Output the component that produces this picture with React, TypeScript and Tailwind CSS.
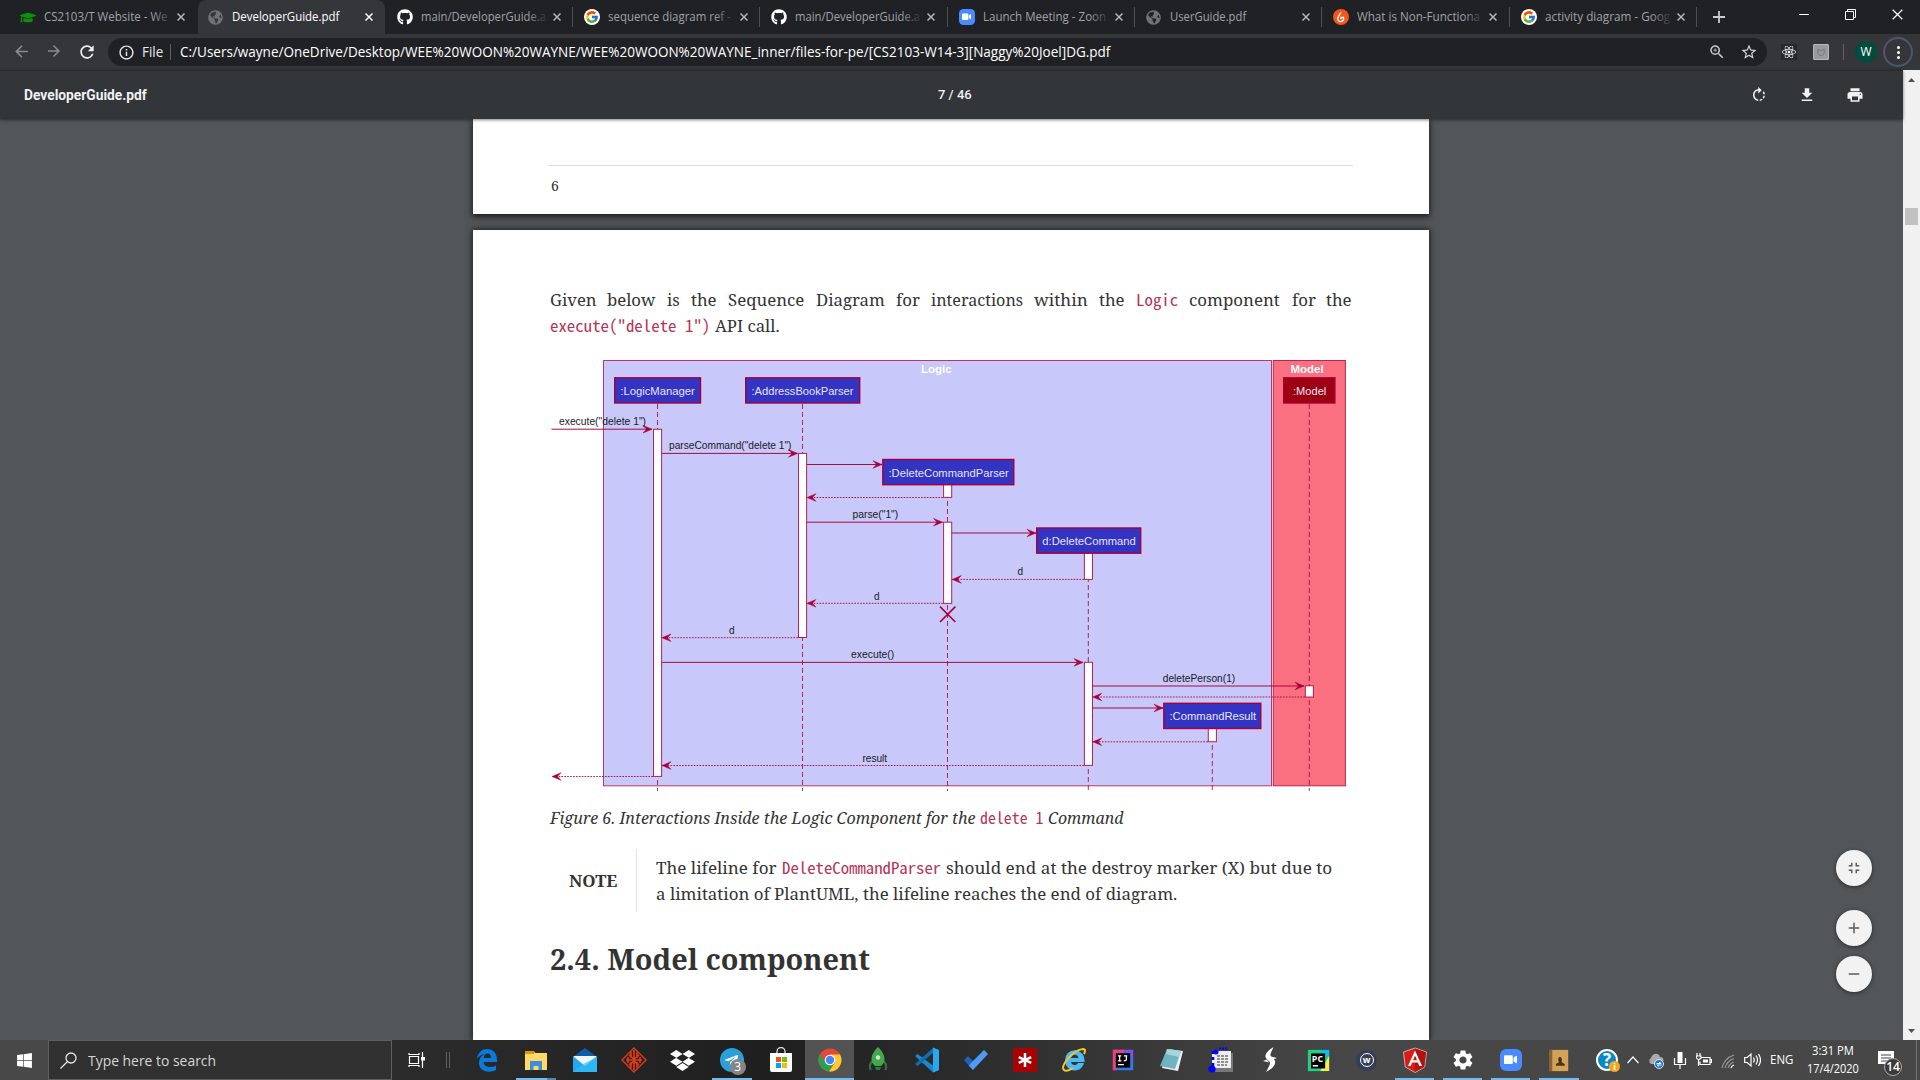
import React, { useLayoutEffect, useRef, useState } from "react";
import { FaGithub, FaDropbox, FaGraduationCap, FaGlobeAmericas, FaTelegramPlane, FaWindows, FaReact, FaVideo } from "react-icons/fa";
import { FcGoogle } from "react-icons/fc";
import { MdRotateRight, MdFileDownload, MdPrint, MdArrowBack, MdArrowForward, MdRefresh, MdZoomIn, MdStarBorder, MdInfoOutline, MdSettings, MdFullscreenExit, MdAdd, MdRemove } from "react-icons/md";

/* Text set to an exact advance width; glyphs are condensed or stretched to fill it. */
function Fit({ w, className = "", children }: { w: number; className?: string; children: React.ReactNode }) {
  const ref = useRef<HTMLSpanElement>(null);
  const [scale, setScale] = useState(1);
  useLayoutEffect(() => {
    if (ref.current) setScale(w / ref.current.offsetWidth);
  }, [w]);
  return (
    <span className={"inline-block whitespace-nowrap " + className} style={{ width: w }}>
      <span ref={ref} className="inline-block origin-left" style={{ transform: `scaleX(${scale})` }}>
        {children}
      </span>
    </span>
  );
}

const ZoomLogo = ({ size }: { size: number }) => (
  <span className="flex items-center justify-center rounded-[28%] bg-[#4a8cff] text-white" style={{ width: size, height: size }}>
    <FaVideo size={size * 0.6} />
  </span>
);

const tabs = [
  { t: "CS2103/T Website - We", w: 124, icon: <FaGraduationCap size={17} color="#0a930a" /> },
  { t: "DeveloperGuide.pdf", w: 107, active: true, icon: <FaGlobeAmericas size={15} color="#6f7276" /> },
  { t: "main/DeveloperGuide.a", w: 125, icon: <FaGithub size={16} color="#fff" /> },
  { t: "sequence diagram ref -", w: 123, icon: <G /> },
  { t: "main/DeveloperGuide.a", w: 125, icon: <FaGithub size={16} color="#fff" /> },
  { t: "Launch Meeting - Zoon", w: 123, icon: <ZoomLogo size={16} /> },
  { t: "UserGuide.pdf", w: 76, icon: <FaGlobeAmericas size={15} color="#6f7276" /> },
  {
    t: "What is Non-Functiona", w: 123,
    icon: (
      <svg width="16" height="16" viewBox="0 0 16 16"><circle cx="8" cy="8" r="8" fill="#f4571b" /><path d="M8 3.2 5.6 7.4a3 3 0 1 0 4.9 1.1L8 8.4v1.8" stroke="#fff" strokeWidth="1.3" fill="none" /></svg>
    ),
  },
  { t: "activity diagram - Goog", w: 125, icon: <G /> },
];

function G() {
  return <span className="flex size-4 items-center justify-center rounded-full bg-white"><FcGoogle size={14} /></span>;
}

const Cross = ({ color, s = 8 }: { color: string; s?: number }) => (
  <svg width={s} height={s} viewBox="0 0 8 8"><path d="M0.5 .5 7.5 7.5M7.5 .5 .5 7.5" stroke={color} strokeWidth={s > 9 ? 0.9 : 1.5} /></svg>
);

function TabStrip() {
  return (
    <div className="flex h-[34px] shrink-0 bg-[#202124] pl-[10px]">
      {tabs.map((tab, i) => (
        <div
          key={i}
          className={
            "relative flex h-[34px] w-[187.3px] shrink-0 items-center " +
            (tab.active ? "rounded-t-lg bg-[#35363a] pl-[10px] text-white" : "pl-3 text-[#9fa3a8]") +
            (i === 0 ? " w-[187.5px]! pl-[10px]!" : "")
          }
        >
          <span className="flex w-4 justify-center">{tab.icon}</span>
          <span className="ml-2 flex w-[128px] overflow-hidden text-[12px] leading-4">
            <Fit w={tab.w}>{tab.t}</Fit>
          </span>
          {tab.w > 110 && (
            <span className="absolute left-[142px] h-5 w-[22px] bg-linear-to-r from-transparent to-[#202124]" />
          )}
          <span className={tab.active || i === 0 ? "ml-[5px]" : "ml-1"}><Cross color={tab.active ? "#fff" : "#b4b7bb"} /></span>
          {i > 1 && <span className="absolute -right-px top-[7px] h-5 w-px bg-[#4d4f53]" />}
        </div>
      ))}
      <svg className="ml-[17px] mt-[11px]" width="12" height="12" viewBox="0 0 12 12"><path d="M6 0v12M0 6h12" stroke="#ccc" strokeWidth="1.8" /></svg>
      <div className="ml-auto flex gap-[36px] pr-[17px] pt-[9px]">
        <svg width="10" height="11"><path d="M0 5.500h10" stroke="#fff" /></svg>
        <svg width="11" height="11"><path d="M.5 2.500h8v8h-8zM2.500 2.500v-2h8v8h-2" stroke="#fff" fill="none" /></svg>
        <Cross color="#fff" s={11} />
      </div>
    </div>
  );
}

function AddressBar() {
  return (
    <div className="flex h-9 shrink-0 items-center bg-[#35363a]">
      <div className="flex w-[108px] gap-[14px] pl-[12px]">
        <MdArrowBack size={19} color="#8a8b8e" />
        <MdArrowForward size={18} color="#8a8b8e" />
        <MdRefresh size={20} color="#f1f1f1" />
      </div>
      <div className="flex h-7 w-[1659px] items-center rounded-full bg-[#202124] pl-[10px] pr-[9px] text-[14px] text-[#e8eaed]">
        <MdInfoOutline size={17} />
        <Fit w={21} className="-mt-px ml-[7px]">File</Fit>
        <span className="ml-[7px] mr-[9px] h-4 w-px bg-[#5f6165]" />
        <Fit w={930} className="-mt-px text-white">C:/Users/wayne/OneDrive/Desktop/WEE%20WOON%20WAYNE/WEE%20WOON%20WAYNE_inner/files-for-pe/[CS2103-W14-3][Naggy%20Joel]DG.pdf</Fit>
        <MdZoomIn size={18} className="ml-auto mr-[14px]" color="#c8c9cc" />
        <MdStarBorder size={18} color="#d5d6d8" />
      </div>
      <span className="ml-[14px] flex size-4 items-center justify-center bg-[#27282b]"><FaReact size={14} color="#fff" /></span>
      <span className="ml-4 flex size-4 items-center justify-center rounded-[1px] border border-[#b8b8b8] bg-[#989a9d]">
        <svg width="8" height="9" viewBox="0 0 8 9"><path d="M.8 1v4.600L4 7.800l3.200-2.200V1L4 3z" fill="none" stroke="#76787b" /></svg>
      </span>
      <span className="ml-[14px] h-4 w-px bg-[#606266]" />
      <span className="ml-[11px] flex size-[22px] items-center justify-center rounded-full bg-[#004d40] text-[12px] text-white">W</span>
      <span className="ml-[6px] flex size-[30px] flex-col items-center justify-center gap-[2px] rounded-full border-2 border-[#4c566d]">
        <i className="size-[3px] rounded-full bg-white" />
        <i className="size-[3px] rounded-full bg-white" />
        <i className="size-[3px] rounded-full bg-white" />
      </span>
    </div>
  );
}

function ViewerBar() {
  return (
    <div className="relative z-10 flex h-[49px] shrink-0 items-center border-t border-[#28292b] bg-[#323639] pl-6 font-['Roboto'] text-[#f1f1f1] shadow-[0_1px_3px_rgba(0,0,0,0.5)]">
      <Fit w={123} className="text-[14px] font-bold">DeveloperGuide.pdf</Fit>
      <Fit w={34} className="ml-[791px] text-[13px] font-medium">7 / 46</Fit>
      <div className="ml-auto flex gap-[30px] pr-[39px]">
        <MdRotateRight size={18} />
        <MdFileDownload size={18} />
        <MdPrint size={18} />
      </div>
    </div>
  );
}

/* ---------- sequence diagram ---------- */

const RED = "#a80036";

const T = ({ x, y, w, s = 10.6, f = "#1a1a22", b, children }: { x: number; y: number; w: number; s?: number; f?: string; b?: boolean; children: string }) => (
  <text x={x} y={y} fontSize={s} fill={f} fontWeight={b ? 700 : 400} textLength={w} lengthAdjust="spacingAndGlyphs">{children}</text>
);

const Arrow = ({ x1, x2, y, dash }: { x1: number; x2: number; y: number; dash?: boolean }) => {
  const d = x2 > x1 ? -1 : 1;
  return (
    <g>
      <path d={`M${x1} ${y}H${x2}`} stroke={RED} strokeWidth="1" strokeDasharray={dash ? "1.7 1.2" : undefined} opacity={dash ? 0.85 : 0.95} />
      <path d={`M${x2} ${y}l${9 * d} -3.8l${-3.6 * d} 3.8l${3.6 * d} 3.8z`} fill={RED} stroke={RED} strokeWidth=".5" />
    </g>
  );
};

const lifelines = [
  [657.5, 403], [802.5, 403], [947.5, 484], [1088.3, 552], [1309.3, 403], [1212.3, 728],
];
const activations = [
  [653.5, 429.3, 776.4], [798.5, 453.4, 637.5], [943.6, 484, 497.4], [943.6, 522.2, 603.4],
  [1084.4, 552, 579.4], [1084.4, 662.3, 765.4], [1305.3, 685.8, 697], [1208.3, 728, 741.7],
];
const heads = [
  { x: 614.7, y: 377.8, w: 85.8, t: ":LogicManager", tx: 620.3, tw: 74.4 },
  { x: 745.7, y: 377.8, w: 114, t: ":AddressBookParser", tx: 751.5, tw: 102 },
  { x: 882.8, y: 459.5, w: 131, t: ":DeleteCommandParser", tx: 888.5, tw: 120.3 },
  { x: 1036.7, y: 528, w: 104, t: "d:DeleteCommand", tx: 1042.3, tw: 93.5 },
  { x: 1163.8, y: 703.3, w: 97, t: ":CommandResult", tx: 1169.5, tw: 86.7 },
  { x: 1283.7, y: 377.8, w: 51.2, t: ":Model", tx: 1293, tw: 33.3, m: true },
];

function Diagram() {
  return (
    <svg width="804" height="440" viewBox="549 355 804 440" className="block font-['Liberation_Sans']">
      <rect x="603.5" y="360.5" width="668" height="425.3" fill="#c8c8fa" stroke={RED} strokeOpacity=".75" />
      <rect x="1273.2" y="360.5" width="72.2" height="425.3" fill="#fa7080" stroke={RED} strokeOpacity=".8" />
      <T x={921} y={372.6} w={30.5} s={11.6} f="#fff" b>Logic</T>
      <T x={1290.5} y={372.6} w={33.2} s={11.6} f="#fff" b>Model</T>
      {lifelines.map(([x, y]) => (
        <path key={x} d={`M${x} ${y + 1}V791`} stroke={RED} strokeWidth="1" strokeDasharray="5 3" strokeOpacity=".8" />
      ))}
      {activations.map(([x, y, e]) => (
        <rect key={`${x}-${y}`} x={x} y={y} width="8.1" height={e - y} fill="#fff" stroke={RED} strokeOpacity=".85" />
      ))}
      {heads.map((h) => (
        <g key={h.t}>
          <rect x={h.x} y={h.y} width={h.w} height="25.2" fill={h.m ? "#9d0012" : "#3333c4"} stroke={RED} strokeWidth="1.4" />
          <T x={h.tx} y={h.y + 17} w={h.tw} s={11.4} f="#e6e6f8">{h.t}</T>
        </g>
      ))}
      <Arrow x1={551.5} x2={652} y={429.2} />
      <Arrow x1={662} x2={797.5} y={453.4} />
      <Arrow x1={807} x2={882} y={464.5} />
      <Arrow x1={943} x2={807} y={497.5} dash />
      <Arrow x1={807} x2={942.5} y={522.2} />
      <Arrow x1={952} x2={1036} y={533} />
      <Arrow x1={1084} x2={952.3} y={579.4} dash />
      <Arrow x1={943} x2={807} y={603.3} dash />
      <Arrow x1={798} x2={662} y={637.7} dash />
      <Arrow x1={662} x2={1083} y={662.4} />
      <Arrow x1={1093} x2={1304} y={686} />
      <Arrow x1={1305} x2={1092.8} y={697} dash />
      <Arrow x1={1093} x2={1163} y={708} />
      <Arrow x1={1208} x2={1092.8} y={741.8} dash />
      <Arrow x1={1084} x2={662} y={765.5} dash />
      <Arrow x1={653} x2={552} y={776.5} dash />
      <path d="M940 606.6l15.4 15.4M955.4 606.6 940 622" stroke={RED} strokeWidth="1.6" />
      <T x={559} y={425.4} w={87}>execute("delete 1")</T>
      <T x={669} y={449} w={122.5}>parseCommand("delete 1")</T>
      <T x={852.6} y={517.7} w={45.6}>parse("1")</T>
      <T x={1017.6} y={575.2} w={5.6}>d</T>
      <T x={874} y={599.6} w={5.6}>d</T>
      <T x={729} y={634.2} w={5.6}>d</T>
      <T x={851} y={657.8} w={43.2}>execute()</T>
      <T x={1162.8} y={682.4} w={72.4}>deletePerson(1)</T>
      <T x={862.4} y={762} w={24.8}>result</T>
    </svg>
  );
}

/* ---------- document ---------- */

const Code = ({ w, children }: { w: number; children: string }) => (
  <Fit w={w} className="-mt-px font-['M+_1mn','Noto_Sans_Mono_CJK_JP','Noto_Sans_Mono','DejaVu_Sans_Mono',monospace] text-[16.5px] leading-[26px] not-italic text-[#b83358]">{children}</Fit>
);

const first = "Given below is the Sequence Diagram for interactions within the".split(" ");
const firstW = [46.5, 48.5, 13, 25.5, 76.5, 69, 23.5, 92, 54, 25.5];

function Document() {
  return (
    <div className="flex h-[921px] w-[956px] flex-col gap-4 overflow-visible font-['Noto_Serif','DejaVu_Serif',serif] text-[16.5px] text-[#333]">
      <div className="h-[95px] shrink-0 bg-white px-[76px] pt-[46px] shadow-[0_2px_6px_1px_rgba(0,0,0,0.65)]">
        <div className="border-t border-[#ddd] pl-[2px] pt-[9px] text-[14px] leading-[22px]"><Fit w={8}>6</Fit></div>
      </div>
      <div className="h-[810px] shrink-0 bg-white pl-[76px] shadow-[0_0_6px_1px_rgba(0,0,0,0.65)]">
        <div className="flex w-[803px] justify-between pl-[0.500px] pt-[57px] leading-[26px]">
          {first.map((t, i) => <Fit key={i} w={firstW[i]}>{t}</Fit>)}
          <Code w={42}>Logic</Code>
          <Fit w={91}>component</Fit>
          <Fit w={23.5}>for</Fit>
          <Fit w={25.5}>the</Fit>
        </div>
        <div className="flex h-[42px] gap-[5px] pl-[0.500px] leading-[26px]">
          <Code w={160.5}>execute("delete 1")</Code>
          <Fit w={65}>API call.</Fit>
        </div>
        <Diagram />
        <div className="mt-[10px] flex gap-[5px] pl-[0.500px] text-[16px] italic leading-[26px]">
          <Fit w={425}>Figure 6. Interactions Inside the Logic Component for the</Fit>
          <Code w={63.5}>delete 1</Code>
          <Fit w={75.5}>Command</Fit>
        </div>
        <div className="mt-[18px] flex h-[63px]">
          <div className="flex w-[88px] items-center border-r border-[#e4e4e4] pl-[19.500px] font-bold"><Fit w={48.5} className="text-[16px]">NOTE</Fit></div>
          <div className="pl-[18.500px] pt-[6px] leading-[26px]">
            <div className="flex h-[26px] gap-[5px]">
              <Fit w={121}>The lifeline for</Fit>
              <Code w={159.5}>DeleteCommandParser</Code>
              <Fit w={386}>should end at the destroy marker (X) but due to</Fit>
            </div>
            <Fit w={521}>a limitation of PlantUML, the lifeline reaches the end of diagram.</Fit>
          </div>
        </div>
        <div className="pl-[0.500px] pt-[26px] text-[28px] font-bold leading-[42px]"><Fit w={320}>2.4. Model component</Fit></div>
      </div>
    </div>
  );
}

const Round = ({ children, className = "" }: { children: React.ReactNode; className?: string }) => (
  <span className={"flex size-9 items-center justify-center rounded-full bg-[#f2f2f2] text-[#5a5a5a] shadow-[0_1px_4px_rgba(0,0,0,0.5)] " + className}>{children}</span>
);

/* ---------- taskbar ---------- */

const S = ({ children, s = 26 }: { children: React.ReactNode; s?: number }) => <svg width={s} height={s} viewBox="0 0 26 26">{children}</svg>;

const apps: { icon: React.ReactNode; on?: boolean; hi?: boolean; split?: boolean }[] = [
  { icon: <S><path d="M3 12C4 5 8 2 13 2c6 0 10 4.500 10 10.500V15H9.500c.3 3.500 3 5 6.500 5 2.500 0 4.500-.7 6-1.600V23c-2 1.200-4.300 1.700-7 1.700C8.500 24.700 5 21 5 16c0-4 2-7 5.500-9C7 7.500 4.500 9.500 3 12zm6.600-1H17c0-3-1.300-4.500-3.500-4.500S9.900 8.300 9.600 11z" fill="#0a7bdc" /></S> },
  { icon: <S><path d="M2 4h9l1 2h12v17H2z" fill="#ffd866" /><path d="M2 4h9v3H2z" fill="#d99a00" /><path d="M7 23v-9h12v9h-3.500v-4h-5v4z" fill="#3a8edb" /></S>, on: true, split: true },
  { icon: <S><path d="M1 10 13 1l12 9v3H1z" fill="#0d5ea8" /><path d="M1 10h24v15H1z" fill="#24a8ec" /><path d="M1 9h24L13 19z" fill="#f3f5f6" /><path d="M1 25 13 16l12-6v15z" fill="#2fc0fa" opacity=".65" /></S> },
  { icon: <S><path d="m13 1 12 12-12 12L1 13z" fill="none" stroke="#e03a18" strokeWidth="1.400" /><path d="M13 3v20M8 8l5 4 5-4M5 13h16M8 18l5-4 5 4M10 5v6M16 5v6M10 15v6M16 15v6M7 10v6M19 10v6" stroke="#e03a18" strokeWidth="1.700" fill="none" /></S> },
  { icon: <FaDropbox size={25} color="#fff" /> },
  { icon: <span className="relative flex size-6 items-center justify-center rounded-full bg-[#2b9fd9]"><FaTelegramPlane size={15} color="#fff" /><span className="absolute left-[10px] top-[11px] flex size-4 items-center justify-center rounded-full bg-[#858585] text-[12px] text-white">3</span></span>, on: true },
  { icon: <S><path d="M9 7V4.500a4 4 0 0 1 8 0V7" fill="none" stroke="#ddd" strokeWidth="1.300" /><path d="M2 6h22v17a2 2 0 0 1-2 2H4a2 2 0 0 1-2-2z" fill="#fff" /><path d="M8 10h5v5H8z" fill="#f25022" /><path d="M14 10h5v5h-5z" fill="#7fba00" /><path d="M8 16h5v5H8z" fill="#00a4ef" /><path d="M14 16h5v5h-5z" fill="#ffb900" /></S> },
  { icon: <S><circle cx="13" cy="13" r="11.500" fill="#e14a3b" /><path d="M3 7.300A11.500 11.500 0 0 0 12 24.500L17.500 15 8.500 15.500z" fill="#2da04e" /><path d="M23 7.500H13l5 8-6 9A11.500 11.500 0 0 0 23 7.500z" fill="#fbcb2f" /><circle cx="13" cy="13" r="5.300" fill="#fff" /><circle cx="13" cy="13" r="4.200" fill="#4486f4" /></S>, on: true, hi: true },
  { icon: <S><path d="M8 14c-3 2-4 5-2.500 9M18 14c3 2 4 5 2.500 9" fill="none" stroke="#35704a" strokeWidth="2.200" /><path d="M13 0c5 5 6.500 9 6.500 12.500 0 3-2 5-3.500 6.500h-6c-1.500-1.500-3.500-3.500-3.500-6.500C6.500 9 8 5 13 0z" fill="#43a84b" /><path d="M10 20h6l-1 3h-4z" fill="#2c7d3d" /><circle cx="13" cy="10.500" r="2.200" fill="#cfe8d0" /></S> },
  { icon: <S><path d="M1 9 3.500 7 25 23v0l-6 2.500z" fill="#1c86cf" /><path d="M1 17l2.500 2L19 6V1z" fill="#0f6fb5" /><path d="M19 .5 25 3v20l-6 2.500z" fill="#29a8ef" /></S> },
  { icon: <S><path d="m1 13 4-4 6 6-4 5z" fill="#2160c0" /><path d="M7 17 21 3l4 4-15 16-4-4z" fill="#4e9af5" /></S> },
  { icon: <span className="flex size-6 items-center justify-center bg-[#a80202]"><S s={18}><path d="M13 3v20M4 9l18 8M22 9 4 17" stroke="#fff" strokeWidth="3.600" /></S></span> },
  { icon: <S><path d="M4 13a9.500 9.500 0 0 1 19.500 0v2H10c.3 3 5 4.500 7 1h6c-1.500 5-5 7.500-9.500 7.500C8 23.500 4 19 4 13zm6-2h7.500c-.5-4.500-7-4.500-7.500 0z" fill="#4cbaf0" /><path d="M3 23C-1 19 12 3 22 2c3 0 2 3 1 5M3 23c2 2 6 0 9-2" fill="none" stroke="#f6c52c" strokeWidth="2" /></S> },
  { icon: <S s={22}><path d="M1 1h13l11 8v16H1z" fill="#2f79e8" /><path d="M1 1h14L5 25H1z" fill="#f0407c" /><path d="M14 1h11v12z" fill="#7d4ff0" /><path d="M4.500 5h17v17h-17z" fill="#000" /><path d="M7 8h4M9 8v6M7 14h4M14 8h4M17 8v4.500q0 1.500-3 1.500M7 18.500h7" stroke="#fff" strokeWidth="1.500" fill="none" /></S> },
  { icon: <S><path d="M9 2 24 4l-5 20-16-3z" fill="#eee" /><path d="M8 2l14 2-6 18L1 19z" fill="#6fb4c0" /><path d="m8 2 14 2-2 6-13-3z" fill="#a5d4da" /></S> },
  { icon: <S><path d="M5 6h20v19H7z" fill="#777" /><path d="M4 4h19v17H4z" fill="#eee" /><path d="M9 9h11M9 12h11M9 15h11M9 18h10" stroke="#333" strokeWidth="1" strokeDasharray="3 1" /><path d="M5 4v18" stroke="#00f" strokeWidth="2.500" strokeDasharray="3 3" /><circle cx="4" cy="22" r="3.600" fill="#00f" /><circle cx="8" cy="5" r="2.500" fill="#00f" /><path d="M11 1.500h8" stroke="#00f" strokeWidth="2" strokeDasharray="2 1" /></S> },
  { icon: <S><path d="M16.500 0C10 4 7 8 9 11c1 2 4 3 4 5s-2 5-4 9c6-3 10-7 9-11-.7-2.500-4-3.500-4.500-5.500S15 4 16.500 0z" fill="#fff" /><path d="m6 14 4-1.500 2 3zM20 11l-4 1.500-2-3z" fill="#fff" /></S> },
];
const apps2: typeof apps = [
  { icon: <S s={23}><path d="M1 1h24v24H1z" fill="#1fd088" /><path d="M14 1h11v10z" fill="#17b7f0" /><path d="M25 8v17H15z" fill="#f3ee4d" /><path d="M4.500 5h16v17h-16z" fill="#000" /><text x="5.500" y="14.500" fontSize="10" fontWeight="700" fill="#fff">PC</text><path d="M6.500 19h6" stroke="#fff" strokeWidth="1.700" /></S> },
  { icon: <span className="flex size-[21px] items-center justify-center rounded-full bg-[#353e54]"><span className="flex size-[14px] items-center justify-center rounded-full border-[1.500px] border-white pb-px text-[9px] font-bold text-white">w</span></span> },
  { icon: <S s={26}><path d="m13 1 11.500 4-1.800 15L13 25.500 3.300 20 1.500 5z" fill="#dd1b16" stroke="#cfcfcf" strokeWidth=".8" /><path d="m13 1.500 11 4-1.800 14.300L13 25z" fill="#b3120d" /><path d="M6 19 13 3.500 20 19h-2.700l-1.400-3.500h-5.800L8.700 19zm5-5.800h4L13 8.500z" fill="#fff" /></S>, on: true },
  { icon: <MdSettings size={24} color="#fff" />, on: true },
  { icon: <ZoomLogo size={22} />, on: true },
  { icon: <S s={23}><path d="M3 1h21v24H3z" fill="#d4a257" /><path d="M3 1h3v24H3z" fill="#8a6330" /><path d="M10 19v-2l3.500-2c-3-8 5-8 3 0l3.500 2v2z" fill="#473319" /></S>, on: true },
];

const AppButton = ({ a, cls }: { a: (typeof apps)[number]; cls: string }) => (
  <div className={"relative flex h-10 shrink-0 items-center justify-center " + cls + (a.hi ? " bg-[#535353]" : "")}>
    {a.icon}
    {a.on && <span className={"absolute bottom-0 h-[2px] bg-[#76b9ed] " + (a.hi ? "inset-x-0" : "inset-x-[4.500px]")} />}
    {a.split && <span className="absolute bottom-0 right-[4px] h-[2px] w-[9px] bg-[#5287b3]" />}
  </div>
);

const W = ({ w, children }: { w: number; children: React.ReactNode }) => (
  <svg width={w} height="22" viewBox={`0 0 ${w} 22`} fill="none" stroke="#fff" strokeWidth="1.200" className="shrink-0">{children}</svg>
);

function Taskbar() {
  return (
    <div className="flex h-10 w-full shrink-0 items-center bg-linear-to-r from-[#3a3a3c] via-[#1f1f1f] via-40% to-[#474747] to-70%">
      <div className="flex h-10 w-12 items-center justify-center bg-[#484848]"><FaWindows size={17} color="#fff" /></div>
      <div className="flex h-10 w-[344px] items-center border border-[#5e5e5e] bg-[#313131] pl-[11px] text-[15px] text-[#d6d6d6]">
        <svg width="17" height="17" viewBox="0 0 17 17" fill="none" stroke="#e5e5e5" strokeWidth="1.300"><circle cx="11" cy="6" r="5" /><path d="M7.500 9.500.5 16.500" /></svg>
        <Fit w={128} className="ml-[11px]">Type here to search</Fit>
      </div>
      <svg width="17" height="16" className="ml-4" fill="none" stroke="#fff" strokeWidth="1.200"><path d="M1.500 4.500h9v7h-9zM1 1v1.500h10V1M1 15v-1.500h10V15M14.500 0v16" /><path d="M13 5h4v3.500h-4z" fill="#fff" stroke="none" /></svg>
      <span className="ml-[21px] h-4 w-[4px] border-x border-[#606060]" />
      <div className="ml-[12.500px] flex">
        {apps.map((a, i) => <AppButton key={i} a={a} cls="w-[48.940px]" />)}
        {apps2.map((a, i) => <AppButton key={i} a={a} cls="w-[48.100px]" />)}
      </div>
      <div className="ml-[13px] flex items-center gap-[9px]">
        <span className="relative flex size-[22px] items-center justify-center rounded-full border-2 border-white bg-[#0a8ac4] text-[17px] font-bold text-white">?
          <span className="absolute -bottom-[3px] -right-[4px] flex size-[11px] items-center justify-center rounded-full bg-[#f5a71b] text-[9px]">i</span>
        </span>
        <W w={12}><path d="m.5 14 5.500-6 5.500 6" /></W>
        <W w={16}><path d="M3 15a3.500 3.500 0 0 1 0-6C4 4 11 3 12 8c3 0 4 2 3 5l-3 2z" fill="#a9a9a9" stroke="none" /><circle cx="11" cy="15" r="4.500" fill="#1b75cf" stroke="#fff" strokeWidth=".8" /><path d="M8.500 14.500h4l-1-1.500M13.500 16h-4l1 1.500" /></W>
        <W w={14}><path d="M4.500 3h5v11h-5z" fill="#fff" stroke="none" /><path d="M1.500 9v6.500h11V9M7 16v4" /></W>
        <W w={16}><path d="M5 8.500h9v7H4v-3M14 10.500h1.500v3H14M1 4v3M4 4v3M0 7h5v2q-2.500 3-4.500 0zM2.500 10v7" /><path d="M7 10.500h5v3H7z" fill="#fff" stroke="none" /></W>
        <W w={14}><path d="M1 19A18 18 0 0 1 13 6M4 19a14 14 0 0 1 9-9.500M7 19a9 9 0 0 1 6-6" stroke="#999" /><path d="M10 19a4 4 0 0 1 3-3" stroke="#fff" /></W>
        <W w={17}><path d="M.7 8.500h2.500L7 5v12l-3.800-3.500H.7zM9.500 8.500q1.500 2.500 0 5M12 6.500q3 4.500 0 9M14.500 5q4 6 0 12" /></W>
        <Fit w={23} className="text-[13px] text-white">ENG</Fit>
      </div>
      <div className="ml-[14px] flex flex-col items-center text-[12px] leading-[18px] text-white">
        <Fit w={42}>3:31 PM</Fit>
        <Fit w={52}>17/4/2020</Fit>
      </div>
      <div className="relative ml-[19px] h-[34px] w-[26px]">
        <svg width="17" height="17" viewBox="0 0 17 17" className="mt-[8px]"><path d="M0 0h16v13h-5v4l-4-4H0z" fill="#fff" /><path d="M3 4h10M3 7h10M3 10h6" stroke="#444" /></svg>
        <span className="absolute left-[6px] top-[15px] flex size-[18px] items-center justify-center rounded-full border border-[#aaa] bg-[#3a3a3a] text-[12px] font-semibold text-white">14</span>
      </div>
      <span className="ml-auto mr-[3px] h-10 w-px bg-[#777]" />
    </div>
  );
}

export default function App() {
  return (
    <div className="flex h-[1080px] w-[1920px] flex-col overflow-hidden font-['Segoe_UI','Open_Sans','Noto_Sans',sans-serif]">
      <TabStrip />
      <AddressBar />
      <div className="flex h-[970px]">
        <div className="relative flex w-[1903px] flex-col bg-[#525659]">
          <ViewerBar />
          <div className="h-[921px] overflow-hidden pl-[473px]"><Document /></div>
          <div className="absolute left-[1836px] top-[780px] flex flex-col">
            <Round><MdFullscreenExit size={18} /></Round>
            <Round className="mt-6"><MdAdd size={18} /></Round>
            <Round className="mt-[10px]"><MdRemove size={18} /></Round>
          </div>
        </div>
        <div className="flex w-[17px] flex-col items-center bg-[#f1f1f1]">
          <svg width="7" height="4" className="mt-[8px]"><path d="M0 4 3.500 0 7 4z" fill="#505050" /></svg>
          <div className="mt-[126px] h-[17px] w-[13px] bg-[#c1c1c1]" />
          <svg width="7" height="4" className="mb-[7px] mt-auto"><path d="M0 0 3.500 4 7 0z" fill="#505050" /></svg>
        </div>
      </div>
      <Taskbar />
    </div>
  );
}
